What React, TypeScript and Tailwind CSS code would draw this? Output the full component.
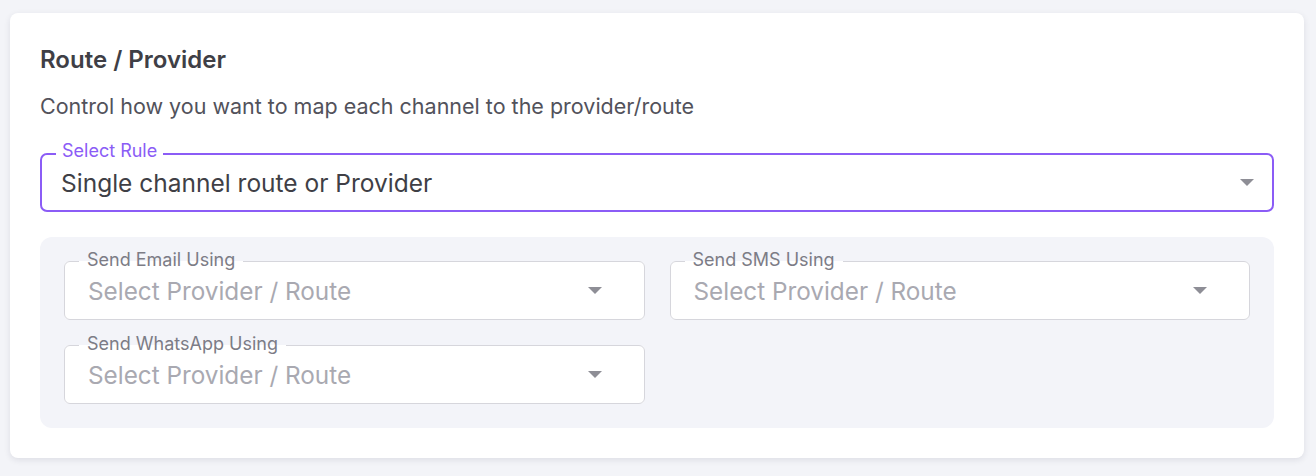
import { type ReactNode } from "react";

function Caret({ className = "" }: { className?: string }) {
  return (
    <svg width="14" height="7" viewBox="0 0 14 7" className={className} fill="currentColor">
      <path d="M0 0h14L7 7z" />
    </svg>
  );
}

// notched outline, same idea as an MUI outlined select
function RuleSelect({ label, value }: { label: string; value: ReactNode }) {
  return (
    <div className="relative flex h-[59px] items-center rounded-[7px] bg-white pl-[21px] pr-[20px]">
      <fieldset className="pointer-events-none absolute inset-x-0 bottom-0 top-[-12px] m-0 rounded-[7px] border-2 border-[#8b5cf6] pl-[14px]">
        <legend className="px-[6px] pb-[6px] text-[18px] leading-[20px] text-[#8b5cf6]">{label}</legend>
      </fieldset>
      <span className="relative flex-1 text-[24.5px] leading-8 text-[#3f3f46]">{value}</span>
      <Caret className="relative text-[#8e8e96]" />
    </div>
  );
}

function ChannelSelect({ label }: { label: string }) {
  return (
    <div className="relative flex h-[59px] items-center rounded-[6px] bg-white pl-[24px] pr-[43px]">
      <fieldset className="pointer-events-none absolute inset-x-0 bottom-0 top-[-11px] m-0 rounded-[6px] border border-[#d6d6dc] pl-[14px]">
        <legend className="px-[8px] pb-[4px] text-[18px] leading-[19px] text-[#7c7c86]">{label}</legend>
      </fieldset>
      <span className="relative flex-1 text-[24.3px] leading-[30px] text-[#a9a9b1]">Select Provider / Route</span>
      <Caret className="relative text-[#8e8e96]" />
    </div>
  );
}

export default function App() {
  return (
    <div className="min-h-screen bg-[#f3f4f8] pl-[10px] pr-[12px] pt-[13px] font-['Inter',sans-serif]">
      <div className="rounded-lg bg-white px-[30px] pb-[30px] pt-[31px] shadow-[0_2px_6px_rgba(30,30,60,0.10)]">
        <h2 className="text-[24px] font-semibold leading-8 text-[#3f3f46]">Route / Provider</h2>
        <p className="mt-4 text-[21.5px] leading-7 text-[#52525b]">
          Control how you want to map each channel to the provider/route
        </p>
        <div className="mt-[33px]">
          <RuleSelect label="Select Rule" value="Single channel route or Provider" />
        </div>
        <div className="mt-[25px] rounded-xl bg-[#f3f4f9] p-6">
          <div className="grid grid-cols-2 gap-[25px]">
            <ChannelSelect label="Send Email Using" />
            <ChannelSelect label="Send SMS Using" />
            <ChannelSelect label="Send WhatsApp Using" />
          </div>
        </div>
      </div>
    </div>
  );
}
